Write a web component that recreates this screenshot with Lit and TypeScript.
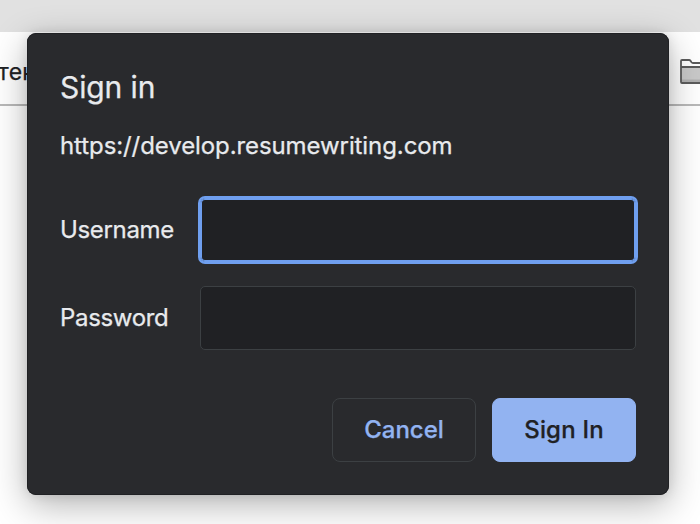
import { LitElement, html, css } from "lit";
import { customElement } from "lit/decorators.js";

@customElement("sign-in-dialog")
class SignInDialog extends LitElement {
  static styles = css`
    :host { display: block; }
    .dialog {
      box-sizing: border-box; width: 642px; height: 462px; padding: 39px 33px 33px;
      background: #292a2d; border-radius: 9px; color: #e8eaed;
      box-shadow: inset 0 0 0 1px #202124, 0 10px 36px rgba(0,0,0,.3), 0 0 12px rgba(0,0,0,.1);
      font: 400 24px/28px Inter, sans-serif;
      -webkit-text-stroke: 0.25px currentColor;
    }
    h1 { margin: 0; font-size: 30px; line-height: 30px; font-weight: 400; letter-spacing: -0.1px; }
    .origin { margin: 30px 0 38px; letter-spacing: -0.09px; white-space: nowrap; }
    .row { display: grid; grid-template-columns: 140px 436px; align-items: center; height: 64px; }
    .row + .row { margin-top: 24px; }
    label { letter-spacing: -0.33px; }
    input {
      box-sizing: border-box; width: 436px; height: 64px; margin: 0; padding: 0 16px;
      background: #202124; border: 1px solid #3c4043; border-radius: 5px; outline: none;
      color: #e8eaed; font: inherit; caret-color: transparent;
    }
    .focused { border-color: #6f9fef; box-shadow: 0 0 0 2px #6f9fef, inset 0 0 0 1px #6f9fef; }
    .actions { display: flex; justify-content: flex-end; gap: 16px; margin-top: 48px; }
    button {
      box-sizing: border-box; width: 144px; height: 64px; padding: 0; border: 1px solid #3c4043;
      border-radius: 8px; background: transparent; color: #92b3f1;
      font: 500 24px/28px Inter, sans-serif; letter-spacing: 0;
    }
    .primary { background: #92b3f1; border-color: #92b3f1; color: #202124; letter-spacing: 0.2px; }
  `;
  render() {
    return html`<form class="dialog">
      <h1>Sign in</h1>
      <div class="origin">https://develop.resumewriting.com</div>
      <div class="row"><label for="user">Username</label><input id="user" class="focused" type="text"></div>
      <div class="row"><label for="pass">Password</label><input id="pass" type="password"></div>
      <div class="actions">
        <button type="button">Cancel</button>
        <button type="button" class="primary">Sign In</button>
      </div>
    </form>`;
  }
}

@customElement("app-root")
class AppRoot extends LitElement {
  static styles = css`
    :host { display: block; position: relative; width: 700px; height: 524px; overflow: hidden; background: #fff; }
    .tabs { height: 32px; background: #e1e1e1; }
    .bookmarks {
      box-sizing: border-box; height: 74px; border-bottom: 2px solid #b9b9b9;
      display: flex; align-items: center; justify-content: space-between;
      font: 400 23px/28px Inter, sans-serif; letter-spacing: 0.3px; color: #202124; padding-top: 7px;
      -webkit-text-stroke: 0.25px currentColor;
    }
    .bookmark { margin-left: -2px; }
    svg { display: block; width: 20px; height: 26px; }
    sign-in-dialog { position: absolute; left: 27px; top: 33px; }
  `;
  render() {
    return html`
      <div class="tabs"></div>
      <div class="bookmarks">
        <span class="bookmark">тен</span>
        <svg viewBox="0 0 20 26">
          <path d="M1 8H24V23H1Z" fill="#c9c9c9"></path>
          <path d="M1 20.5H24V23H1Z" fill="#b0b0b0"></path>
          <path d="M24 24H2Q1 24 1 23V2Q1 1 2 1H9Q10 1 10.7 2L11.5 3.3Q12 4 13 4H24M1 8H24" fill="none" stroke="#5b5b5b" stroke-width="1.8"></path>
        </svg>
      </div>
      <sign-in-dialog></sign-in-dialog>`;
  }
}
